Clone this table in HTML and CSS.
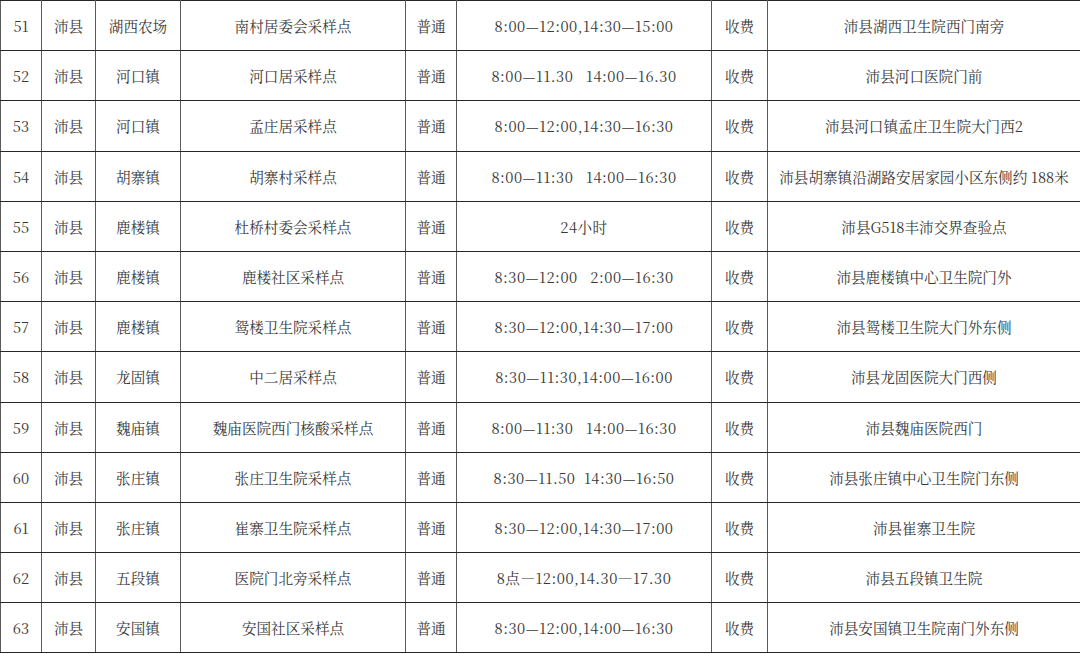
FILE: index.html
```html
<!DOCTYPE html>
<html lang="zh">
<head>
<meta charset="utf-8">
<title>采样点</title>
<link rel="stylesheet" href="styles.css">
</head>
<body>
<table class="sites">
<colgroup>
<col class="c1"><col class="c2"><col class="c3"><col class="c4"><col class="c5"><col class="c6"><col class="c7"><col class="c8">
</colgroup>
<tbody>
<tr><td>51</td><td>沛县</td><td>湖西农场</td><td>南村居委会采样点</td><td>普通</td><td class="t">8:00—12:00,14:30—15:00</td><td>收费</td><td>沛县湖西卫生院西门南旁</td></tr>
<tr><td>52</td><td>沛县</td><td>河口镇</td><td>河口居采样点</td><td>普通</td><td class="t">8:00—11.30   14:00—16.30</td><td>收费</td><td>沛县河口医院门前</td></tr>
<tr><td>53</td><td>沛县</td><td>河口镇</td><td>孟庄居采样点</td><td>普通</td><td class="t">8:00—12:00,14:30—16:30</td><td>收费</td><td>沛县河口镇孟庄卫生院大门西2</td></tr>
<tr><td>54</td><td>沛县</td><td>胡寨镇</td><td>胡寨村采样点</td><td>普通</td><td class="t">8:00—11:30   14:00—16:30</td><td>收费</td><td>沛县胡寨镇沿湖路安居家园小区东侧约 188米</td></tr>
<tr><td>55</td><td>沛县</td><td>鹿楼镇</td><td>杜桥村委会采样点</td><td>普通</td><td class="t">24小时</td><td>收费</td><td>沛县G518丰沛交界查验点</td></tr>
<tr><td>56</td><td>沛县</td><td>鹿楼镇</td><td>鹿楼社区采样点</td><td>普通</td><td class="t">8:30—12:00   2:00—16:30</td><td>收费</td><td>沛县鹿楼镇中心卫生院门外</td></tr>
<tr><td>57</td><td>沛县</td><td>鹿楼镇</td><td>鸳楼卫生院采样点</td><td>普通</td><td class="t">8:30—12:00,14:30—17:00</td><td>收费</td><td>沛县鸳楼卫生院大门外东侧</td></tr>
<tr><td>58</td><td>沛县</td><td>龙固镇</td><td>中二居采样点</td><td>普通</td><td class="t">8:30—11:30,14:00—16:00</td><td>收费</td><td>沛县龙固医院大门西侧</td></tr>
<tr><td>59</td><td>沛县</td><td>魏庙镇</td><td>魏庙医院西门核酸采样点</td><td>普通</td><td class="t">8:00—11:30   14:00—16:30</td><td>收费</td><td>沛县魏庙医院西门</td></tr>
<tr><td>60</td><td>沛县</td><td>张庄镇</td><td>张庄卫生院采样点</td><td>普通</td><td class="t">8:30—11.50  14:30—16:50</td><td>收费</td><td>沛县张庄镇中心卫生院门东侧</td></tr>
<tr><td>61</td><td>沛县</td><td>张庄镇</td><td>崔寨卫生院采样点</td><td>普通</td><td class="t">8:30—12:00,14:30—17:00</td><td>收费</td><td>沛县崔寨卫生院</td></tr>
<tr><td>62</td><td>沛县</td><td>五段镇</td><td>医院门北旁采样点</td><td>普通</td><td class="t">8点—12:00,14.30—17.30</td><td>收费</td><td>沛县五段镇卫生院</td></tr>
<tr><td>63</td><td>沛县</td><td>安国镇</td><td>安国社区采样点</td><td>普通</td><td class="t">8:30—12:00,14:00—16:30</td><td>收费</td><td>沛县安国镇卫生院南门外东侧</td></tr>
</tbody>
</table>
</body>
</html>
```

FILE: styles.css
```css
html, body {
  margin: 0;
  padding: 0;
  background: #ffffff;
}

.sites {
  width: 1080px;
  table-layout: fixed;
  border-collapse: collapse;
  font-family: "Noto Serif CJK SC", "Liberation Serif", "Noto Sans CJK SC", serif;
  font-size: 14.6px;
  color: #383838;
}

.c1 { width: 41px; }
.c2 { width: 54px; }
.c3 { width: 85px; }
.c4 { width: 225px; }
.c5 { width: 51px; }
.c6 { width: 255px; }
.c7 { width: 56px; }
.c8 { width: 313px; }

.sites td {
  height: 49.2px;
  padding: 0;
  text-align: center;
  vertical-align: middle;
  border-top: 1px solid #262626;
  border-bottom: 1px solid #262626;
  border-left: 1.5px solid #5a5a5a;
  border-right: 1.5px solid #5a5a5a;
  white-space: nowrap;
  overflow: hidden;
}

.sites td.t {
  white-space: pre;
  letter-spacing: 0.5px;
}
```
